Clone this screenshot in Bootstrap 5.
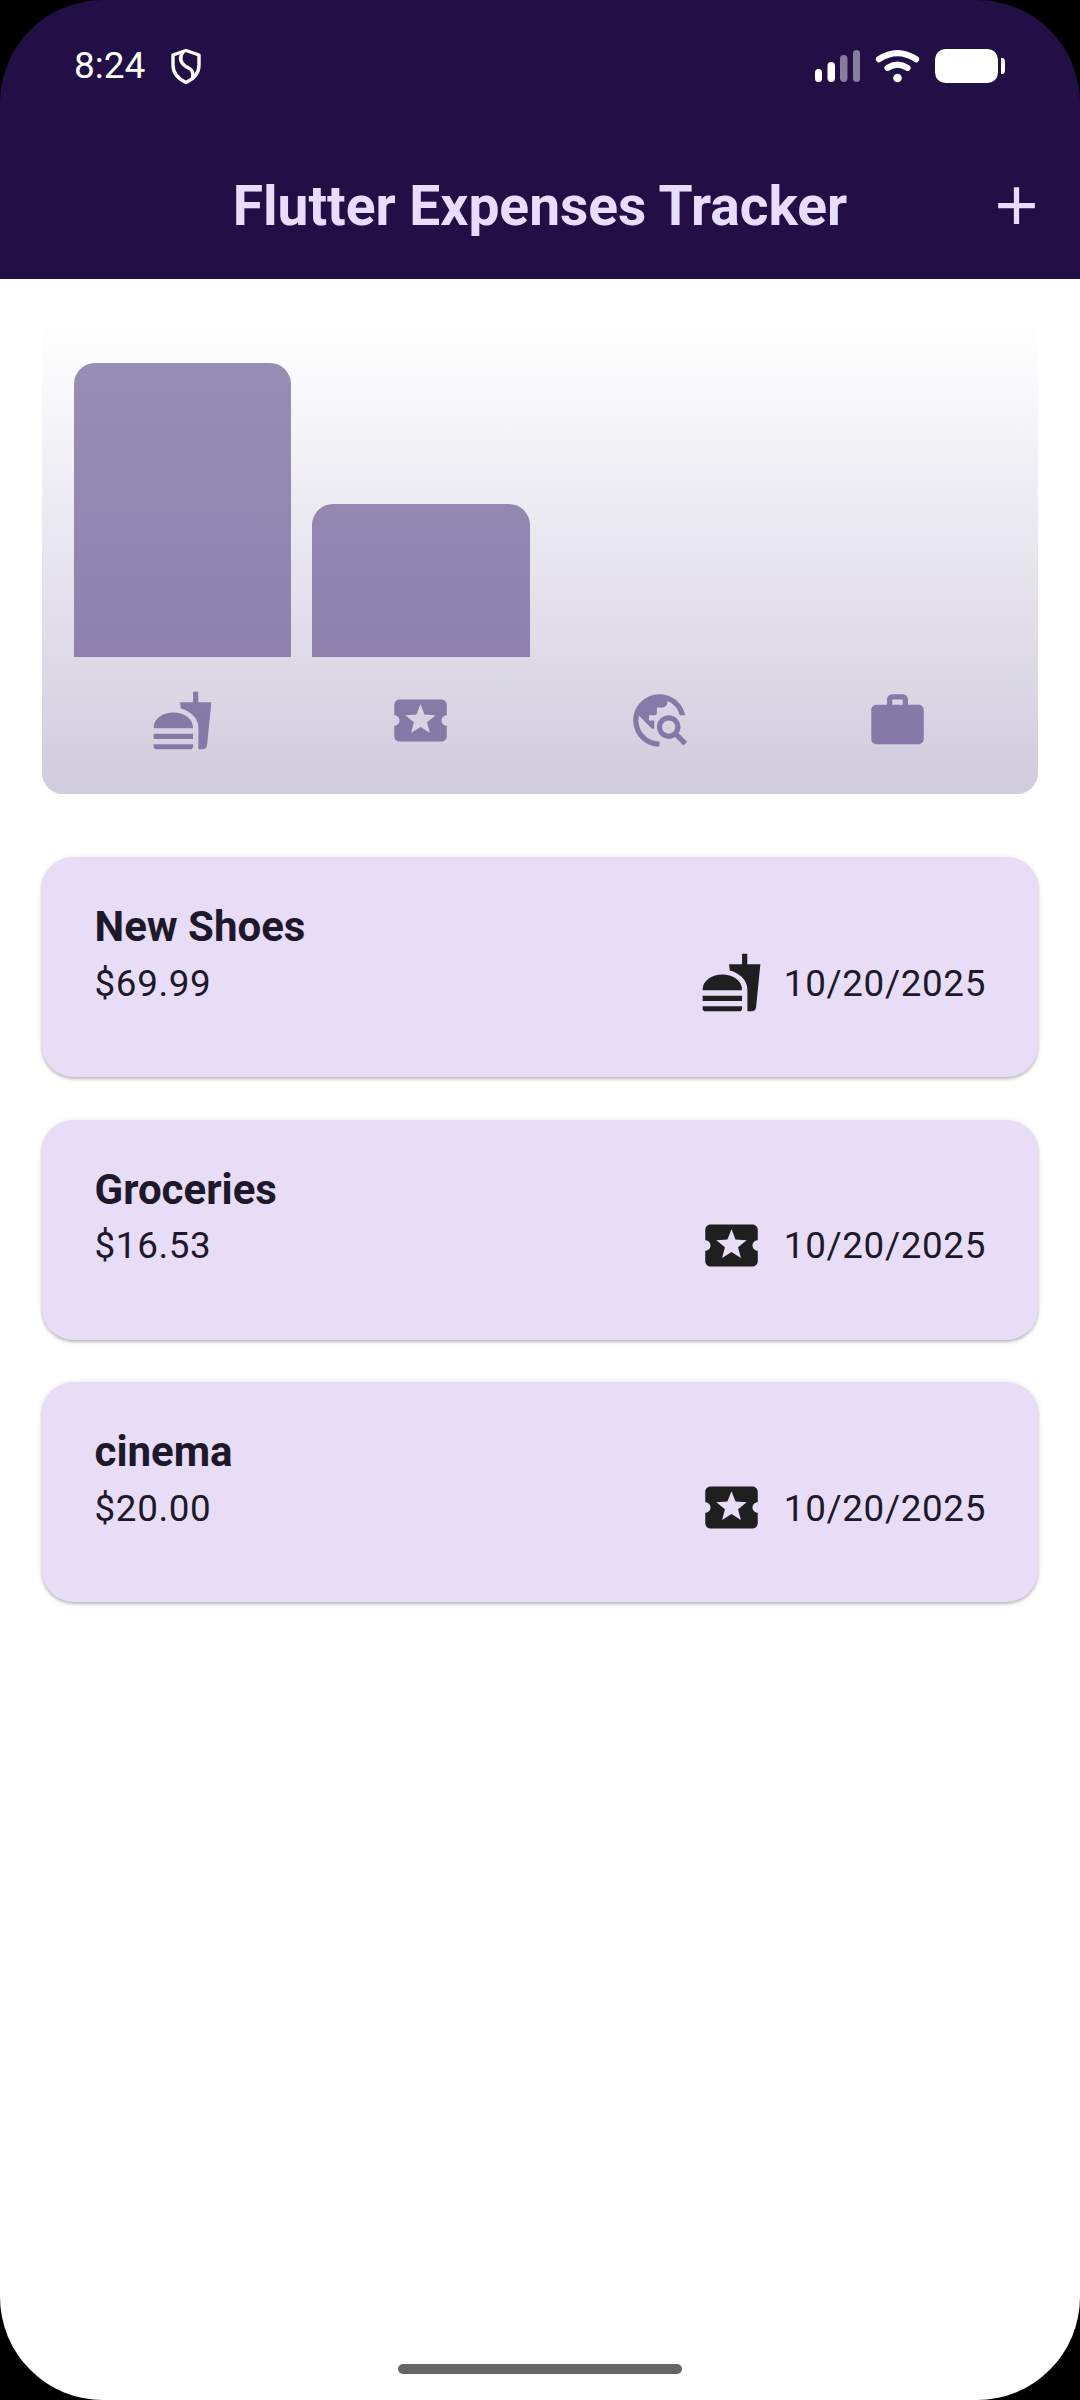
<!DOCTYPE html>
<html lang="en">
<head>
<meta charset="utf-8">
<meta name="viewport" content="width=device-width, initial-scale=1">
<title>Flutter Expenses Tracker</title>
<link href="https://cdn.jsdelivr.net/npm/bootstrap@5.3.0/dist/css/bootstrap.min.css" rel="stylesheet">
<style>
  body { background: #000; font-family: Roboto, sans-serif; color: #1d192b; }
  .phone { width: 1080px; height: 2400px; border-radius: 103px; background: linear-gradient(#210f46 279px, #fff 279px); }
  .app-header { height: 279px; color: #e9ddff; }
  .status { height: 132px; padding: 0 74px 0 74px; color: #fff; font-size: 37px; line-height: 1; }
  .clock { padding-bottom: 2px; }
  .toolbar { height: 147px; }
  .app-title { font-size: 55.1px; font-weight: 700; line-height: 1; padding-top: 2px; }
  .add-btn { right: 32px; top: 42px; color: inherit; line-height: 0; }
  .content { padding: 42px 42px 0; }
  .chart { height: 472.5px; padding: 42px 21px; border-radius: 21px; background: linear-gradient(to top, rgba(99,83,142,.3), rgba(99,83,142,0)); }
  .bars { height: 293.5px; }
  .slot { padding: 0 10.5px; }
  .bar { background: rgba(99,83,142,.65); border-radius: 21px 21px 0 0; }
  .legend { margin-top: 32px; color: rgba(99,83,142,.7); }
  .ico { width: 63px; height: 63px; fill: currentColor; display: block; }
  .expenses { margin-top: 63.5px; gap: 42.5px; }
  .expense { height: 220px; border: 0; border-radius: 31.5px; background: #e7ddf6; color: #1d192b; padding: 42px 52px 42px 52.5px; box-shadow: 0 2px 3px rgba(0,0,0,.2), 0 1px 6px rgba(0,0,0,.12); }
  .expense-name { font-size: 42px; font-weight: 700; line-height: 49px; padding-top: 3px; margin: 0; }
  .expense-row { font-size: 36.75px; line-height: 1; letter-spacing: .66px; height: 63px; }
  .expense-row span { padding-top: 3px; }
  .expense-row .ico { color: #1f1f20; margin-right: 21px; }
  .home-bar { width: 284px; height: 10px; border-radius: 5px; background: #666; margin-bottom: 26px; }
</style>
<script src="https://cdn.jsdelivr.net/npm/bootstrap@5.3.0/dist/js/bootstrap.bundle.min.js" defer></script>
</head>
<body>
<svg class="d-none">
  <symbol id="food" viewBox="0 0 24 24"><path d="M18.06 22.99h1.66c.84 0 1.53-.64 1.63-1.46L23 5.05h-5V1h-1.97v4.05h-4.97l.3 2.34c1.71.47 3.31 1.32 4.27 2.26 1.44 1.42 2.43 2.89 2.43 5.29v8.05zM1 21.99V21h15.03v.99c0 .55-.45 1-1.01 1H2.01c-.56 0-1.01-.45-1.01-1zm15.03-7c0-8-15.03-8-15.03 0h15.03zM1.02 17h15v2h-15z"/></symbol>
  <symbol id="leisure" viewBox="0 0 24 24"><path d="M20 12c0-1.1.9-2 2-2V6c0-1.1-.9-2-2-2H4c-1.1 0-1.99.9-1.99 2v4c1.1 0 1.99.9 1.99 2s-.89 2-2 2v4c0 1.1.9 2 2 2h16c1.1 0 2-.9 2-2v-4c-1.1 0-2-.9-2-2zm-4.42 4.8L12 14.5l-3.58 2.3 1.08-4.12-3.29-2.69 4.24-.25L12 5.8l1.54 3.95 4.24.25-3.29 2.69 1.09 4.11z"/></symbol>
  <symbol id="travel" viewBox="0 0 24 24"><path d="M19.3 16.9c.4-.7.7-1.5.7-2.4 0-2.5-2-4.5-4.5-4.5S11 12 11 14.5s2 4.5 4.5 4.5c.9 0 1.7-.3 2.4-.7l3.2 3.2 1.4-1.4-3.2-3.2zM15.5 17c-1.4 0-2.5-1.1-2.5-2.5s1.1-2.5 2.5-2.5 2.5 1.1 2.5 2.5-1.1 2.5-2.5 2.5zM12 20v2C6.480 22 2 17.520 2 12S6.480 2 12 2c4.840 0 8.870 3.440 9.800 8h-2.070c-.64-2.460-2.400-4.470-4.730-5.410V5c0 1.100-.9 2-2 2h-2v2c0 .55-.45 1-1 1H8v2h2v3H9l-4.790-4.790C4.080 10.790 4 11.380 4 12c0 4.410 3.590 8 8 8z"/></symbol>
  <symbol id="work" viewBox="0 0 24 24"><path d="M20 6h-4V4c0-1.110-.89-2-2-2h-4c-1.110 0-2 .89-2 2v2H4c-1.110 0-1.990.89-1.990 2L2 19c0 1.110.89 2 2 2h16c1.110 0 2-.89 2-2V8c0-1.110-.89-2-2-2zm-6 0h-4V4h4v2z"/></symbol>
</svg>

<div class="phone d-flex flex-column">
  <header class="app-header">
    <div class="status d-flex align-items-center justify-content-between">
      <div class="d-flex align-items-center">
        <span class="clock">8:24</span>
        <svg class="ms-4" width="36" height="40" viewBox="0 0 36 40" fill="none" stroke="#fff" stroke-width="3.4" stroke-linejoin="round" stroke-linecap="round"><path d="M17 4.500L30 9V19C30 27 24.500 33 17 36.500C9.500 33 4 27 4 19V9Z"/><path d="M14 6C10.500 11 11 16 16 20C22 23 25 25 23.500 31"/></svg>
      </div>
      <svg width="192" height="40" viewBox="0 0 192 40" fill="#fff">
        <rect x="1" y="23" width="7" height="13" rx="3.500"/>
        <rect x="13.500" y="16" width="7.500" height="20" rx="3.700"/>
        <rect x="26" y="9" width="7.500" height="27" rx="3.700" opacity=".46"/>
        <rect x="39" y="4" width="7" height="32" rx="3.500" opacity=".46"/>
        <g fill="none" stroke="#fff" stroke-width="6.200" stroke-linecap="round"><path d="M65 13.200Q83.500 1 102 13.200"/><path d="M73.500 21.800Q83.500 15.500 93.500 21.800"/></g>
        <circle cx="83.500" cy="32" r="4.300"/>
        <rect x="121" y="3" width="63" height="34" rx="10.500"/>
        <path d="M187 12h1q3 0 3 4v8q0 4-3 4h-1z"/>
      </svg>
    </div>
    <div class="toolbar position-relative d-flex align-items-center justify-content-center">
      <h1 class="app-title m-0">Flutter Expenses Tracker</h1>
      <button type="button" class="add-btn btn p-0 border-0 position-absolute" aria-label="Add expense">
        <svg class="ico" viewBox="0 0 24 24"><path d="M19 13h-6v6h-2v-6H5v-2h6V5h2v6h6v2z"/></svg>
      </button>
    </div>
  </header>

  <main class="content flex-grow-1">
    <section class="chart">
      <div class="bars row g-0 align-items-end">
        <div class="col slot h-100 d-flex align-items-end"><div class="bar w-100" style="height:100%"></div></div>
        <div class="col slot h-100 d-flex align-items-end"><div class="bar w-100" style="height:52%"></div></div>
        <div class="col slot"></div>
        <div class="col slot"></div>
      </div>
      <div class="legend row g-0">
        <div class="col d-flex justify-content-center"><svg class="ico"><use href="#food"/></svg></div>
        <div class="col d-flex justify-content-center"><svg class="ico"><use href="#leisure"/></svg></div>
        <div class="col d-flex justify-content-center"><svg class="ico"><use href="#travel"/></svg></div>
        <div class="col d-flex justify-content-center"><svg class="ico"><use href="#work"/></svg></div>
      </div>
    </section>

    <section class="expenses d-flex flex-column">
      <article class="card expense">
        <h2 class="expense-name">New Shoes</h2>
        <div class="expense-row d-flex align-items-center"><span class="me-auto">$69.99</span><svg class="ico"><use href="#food"/></svg><span>10/20/2025</span></div>
      </article>
      <article class="card expense">
        <h2 class="expense-name">Groceries</h2>
        <div class="expense-row d-flex align-items-center"><span class="me-auto">$16.53</span><svg class="ico"><use href="#leisure"/></svg><span>10/20/2025</span></div>
      </article>
      <article class="card expense">
        <h2 class="expense-name">cinema</h2>
        <div class="expense-row d-flex align-items-center"><span class="me-auto">$20.00</span><svg class="ico"><use href="#leisure"/></svg><span>10/20/2025</span></div>
      </article>
    </section>
  </main>

  <div class="home-bar mx-auto"></div>
</div>
</body>
</html>
